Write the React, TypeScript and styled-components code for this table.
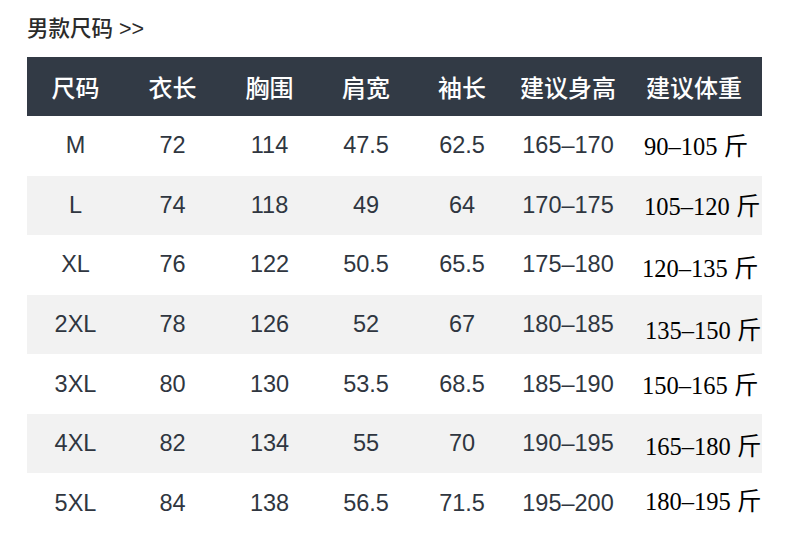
import React from 'react';
import styled, { createGlobalStyle } from 'styled-components';

const GlobalStyle = createGlobalStyle`
  html, body {
    margin: 0;
    padding: 0;
    background: #ffffff;
  }
  body {
    font-family: "Liberation Sans", "Noto Sans CJK SC", sans-serif;
  }
`;

const Page = styled.div`
  width: 790px;
  height: 554px;
  padding: 14px 0 0 27px;
  box-sizing: border-box;
  background: #fff;
`;

const Title = styled.div`
  font-size: 21.5px;
  font-weight: 500;
  line-height: 30px;
  color: #2b2b2b;
  height: 43px;
`;

const Table = styled.div`
  width: 735px;
  display: grid;
  grid-template-columns: 97px 97px 97px 96px 96px 116px 136px;
`;

const HeadCell = styled.div`
  height: 59px;
  background: #323a45;
  color: #fff;
  font-family: "Noto Sans CJK SC", sans-serif;
  font-weight: 500;
  font-size: 24px;
  display: flex;
  align-items: center;
  justify-content: center;
`;

const Cell = styled.div<{ $shade: boolean }>`
  height: 59.57px;
  background: ${(p) => (p.$shade ? '#f2f2f2' : '#fff')};
  color: #2f3640;
  font-size: 23.5px;
  display: flex;
  align-items: center;
  justify-content: center;
`;

const WeightCell = styled(Cell)`
  justify-content: flex-start;
  padding-left: 18px;
  color: #000;
  font-family: "Liberation Serif", "Noto Sans CJK SC", serif;
  font-size: 24.5px;
`;

const WeightText = styled.span<{ $dx: number; $dy: number }>`
  position: relative;
  left: ${(p) => p.$dx}px;
  top: ${(p) => p.$dy}px;
`;

const heads = ['尺码', '衣长', '胸围', '肩宽', '袖长', '建议身高', '建议体重'];

const rows = [
  { size: 'M', vals: ['72', '114', '47.5', '62.5', '165–170'], w: '90–105 斤', dx: 0, dy: -1 },
  { size: 'L', vals: ['74', '118', '49', '64', '170–175'], w: '105–120 斤', dx: 0, dy: -1 },
  { size: 'XL', vals: ['76', '122', '50.5', '65.5', '175–180'], w: '120–135 斤', dx: -2, dy: 2 },
  { size: '2XL', vals: ['78', '126', '52', '67', '180–185'], w: '135–150 斤', dx: 1, dy: 4 },
  { size: '3XL', vals: ['80', '130', '53.5', '68.5', '185–190'], w: '150–165 斤', dx: -2, dy: -1 },
  { size: '4XL', vals: ['82', '134', '55', '70', '190–195'], w: '165–180 斤', dx: 1, dy: 1 },
  { size: '5XL', vals: ['84', '138', '56.5', '71.5', '195–200'], w: '180–195 斤', dx: 1, dy: -4 },
];

export default function App() {
  return (
    <Page>
      <GlobalStyle />
      <Title>男款尺码 &gt;&gt;</Title>
      <Table>
        {heads.map((h) => (
          <HeadCell key={h}>{h}</HeadCell>
        ))}
        {rows.map((r, i) => (
          <React.Fragment key={r.size}>
            <Cell $shade={i % 2 === 1}>{r.size}</Cell>
            {r.vals.map((v, j) => (
              <Cell key={j} $shade={i % 2 === 1}>
                {v}
              </Cell>
            ))}
            <WeightCell $shade={i % 2 === 1}>
              <WeightText $dx={r.dx} $dy={r.dy}>
                {r.w}
              </WeightText>
            </WeightCell>
          </React.Fragment>
        ))}
      </Table>
    </Page>
  );
}
